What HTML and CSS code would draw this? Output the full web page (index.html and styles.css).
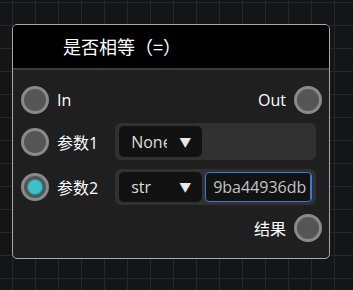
FILE: index.html
```html
<!DOCTYPE html>
<html lang="zh-CN">
<head>
	<meta charset="UTF-8">
	<title>节点</title>
	<link rel="stylesheet" href="styles.css">
</head>
<body>
	<div class="canvas">
		<div class="node">
			<div class="node_title">是否相等（=）</div>
			<div class="node_body">
				<div class="row">
					<span class="port"></span>
					<span class="label">In</span>
					<span class="spacer"></span>
					<span class="label">Out</span>
					<span class="port"></span>
				</div>
				<div class="row param">
					<span class="port"></span>
					<span class="label">参数1</span>
					<div class="field">
						<div class="select"><span class="val">None</span><span class="arrow">▼</span></div>
					</div>
				</div>
				<div class="row param">
					<span class="port on"></span>
					<span class="label">参数2</span>
					<div class="field">
						<div class="select"><span class="val">str</span><span class="arrow">▼</span></div>
						<div class="input">9ba44936db</div>
					</div>
				</div>
				<div class="row out">
					<span class="spacer"></span>
					<span class="label">结果</span>
					<span class="port"></span>
				</div>
			</div>
		</div>
	</div>
</body>
</html>
```

FILE: styles.css
```css
body,div{margin: 0;padding: 0;}
body{background: #141517;font-family: "Open Sans","Noto Sans CJK SC",sans-serif;color: #fff;}

.canvas{position: relative;width: 353px;height: 290px;overflow: hidden;
	background-image: linear-gradient(to right,#27282a 1px,transparent 1px),linear-gradient(to bottom,#27282a 1px,transparent 1px);
	background-size: 23px 23px;background-position: 12px 2px;}

.node{position: absolute;left: 12px;top: 24px;width: 316px;border: 1px solid #a8a8a8;border-radius: 5px;background: #1f1f1f;overflow: hidden;}
.node_title{height: 43px;line-height: 43px;background: #000;padding-left: 50px;font-size: 18px;font-family: "Noto Sans CJK SC",sans-serif;border-bottom: 2px solid #3c3c3c;}
.node_body{padding: 15px 7px 15px 8px;display: flex;flex-direction: column;gap: 8px;}

.row{display: flex;align-items: center;height: 30px;}
.row.param{height: 37px;}
.spacer{flex: 1;}
.label{font-size: 16px;margin: 0 8px 0 8px;font-family: "Open Sans","Noto Sans CJK SC",sans-serif;}
.port{box-sizing: border-box;width: 28px;height: 28px;border-radius: 50%;border: 3px solid #8a8a8a;background: #555;flex: none;position: relative;}
.port.on:after{content: "";position: absolute;left: 4px;top: 4px;width: 14px;height: 14px;border-radius: 50%;background: #3ec0cf;box-shadow: 0 0 0 1px #2a8f9c;}

.field{margin-left: 9px;width: 201px;height: 37px;box-sizing: border-box;padding: 3px 4px;background: #313131;border-radius: 6px;display: flex;gap: 3px;}
.param + .param .field{height: 36px;}
.select{width: 83px;background: #121212;border-radius: 5px;display: flex;align-items: center;padding-left: 12px;box-sizing: border-box;font-size: 16px;color: #ddd;}
.select .val{width: 36px;overflow: hidden;white-space: nowrap;}
.select .arrow{font-size: 12px;margin-left: 12px;color: #e8e8e8;}
.input{flex: 1;background: #121212;border: 1px solid #3a7bd5;border-radius: 4px;box-sizing: border-box;padding-left: 7px;font-size: 16px;line-height: 28px;color: #c4c4c4;white-space: nowrap;overflow: hidden;box-shadow: inset -18px -1px 0 -17px #3a7bd5;}
```
